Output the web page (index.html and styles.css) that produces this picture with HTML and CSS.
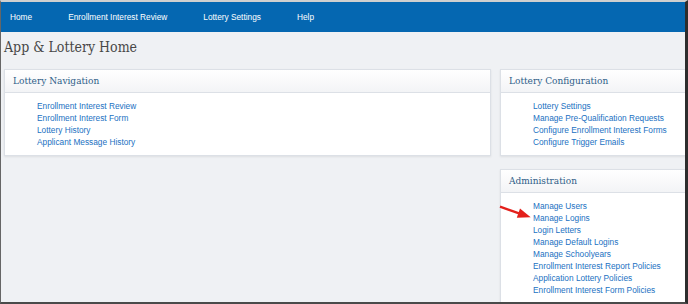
FILE: index.html
```html
<!doctype html>
<html lang="en">
<head>
  <meta charset="utf-8"/>
  <title>App &amp; Lottery Home</title>
  <link rel="stylesheet" href="styles.css">
</head>
<body>
  <div class="screen">
    <nav class="topbar">
      <a href="#">Home</a>
      <a href="#">Enrollment Interest Review</a>
      <a href="#">Lottery Settings</a>
      <a href="#">Help</a>
    </nav>

    <h1 class="page-title">App &amp; Lottery Home</h1>

    <div class="columns">
      <div class="column">
        <section class="panel">
          <h2 class="panel-title">Lottery Navigation</h2>
          <ul class="panel-links">
            <li><a href="#">Enrollment Interest Review</a></li>
            <li><a href="#">Enrollment Interest Form</a></li>
            <li><a href="#">Lottery History</a></li>
            <li><a href="#">Applicant Message History</a></li>
          </ul>
        </section>
      </div>

      <div class="column">
        <section class="panel">
          <h2 class="panel-title">Lottery Configuration</h2>
          <ul class="panel-links">
            <li><a href="#">Lottery Settings</a></li>
            <li><a href="#">Manage Pre-Qualification Requests</a></li>
            <li><a href="#">Configure Enrollment Interest Forms</a></li>
            <li><a href="#">Configure Trigger Emails</a></li>
          </ul>
        </section>
        <section class="panel">
          <h2 class="panel-title">Administration</h2>
          <ul class="panel-links">
            <li><a href="#">Manage Users</a></li>
            <li><a href="#">Manage Logins</a></li>
            <li><a href="#">Login Letters</a></li>
            <li><a href="#">Manage Default Logins</a></li>
            <li><a href="#">Manage Schoolyears</a></li>
            <li><a href="#">Enrollment Interest Report Policies</a></li>
            <li><a href="#">Application Lottery Policies</a></li>
            <li><a href="#">Enrollment Interest Form Policies</a></li>
          </ul>
        </section>
      </div>
    </div>

    <!-- callout pointing at "Manage Logins" -->
    <svg class="callout-arrow" width="36" height="22" viewBox="0 0 36 22">
      <line x1="2" y1="3.7" x2="21" y2="10.3" />
      <polygon points="32.7,14.3 18.8,14.8 22,5.4" />
    </svg>
  </div>
</body>
</html>
```

FILE: styles.css
```css
:root {
  --nav-blue: #0567b1;
  --page-bg: #eff1f4;
  --panel-border: #dce0e6;
  --link-blue: #2171c2;
  --heading-blue: #2e5d88;
}
* { margin: 0; padding: 0; box-sizing: border-box; }
html, body { width: 100%; height: 100%; }
body { font-family: "Liberation Sans", Arial, sans-serif; background-color: #ffffff; }

.screen {
  position: relative;
  width: 688px; height: 304px;
  overflow: hidden;
  background-color: var(--page-bg);
  border-top: 2px solid #cfcfcf;
  border-left: 1px solid #666;
  border-right: 3px solid #2d2d2d;
  border-bottom: 2px solid #4a4a4a;
}

.topbar {
  display: flex; align-items: center;
  height: 30px;
  padding-left: 9px;
  gap: 36px;
  background-color: var(--nav-blue);
}
.topbar a { color: #ffffff; text-decoration: none; font-size: 8.3px; }

.page-title {
  margin: 5px 0 12px 3px;
  line-height: 20px;
  font-family: "DejaVu Serif Condensed", "DejaVu Serif", serif;
  font-weight: normal; font-size: 14px;
  color: #474747;
}

.columns {
  display: grid;
  grid-template-columns: 487px 487px;
  column-gap: 9px;
  align-items: start;
  padding-left: 3px;
}
.column { display: flex; flex-direction: column; gap: 13px; }

.panel {
  background-color: #ffffff;
  border: 1px solid var(--panel-border);
  box-shadow: 0 1px 2px rgba(0, 0, 0, 0.08);
}
.panel-title {
  height: 23px; line-height: 22px;
  padding-left: 8px;
  border-bottom: 1px solid var(--panel-border);
  background: linear-gradient(#ffffff, #f3f4f6);
  font-family: "DejaVu Serif Condensed", "DejaVu Serif", serif;
  font-weight: normal; font-size: 10px;
  color: var(--heading-blue);
}
.panel-links { list-style: none; padding: 7px 0 7px 32px; }
.panel-links li { line-height: 12px; font-size: 8.3px; }
.panel-links a { color: var(--link-blue); text-decoration: none; }

.callout-arrow { position: absolute; left: 497px; top: 201px; }
.callout-arrow line { stroke: #e3201b; stroke-width: 2.4; }
.callout-arrow polygon { fill: #e3201b; }
```
